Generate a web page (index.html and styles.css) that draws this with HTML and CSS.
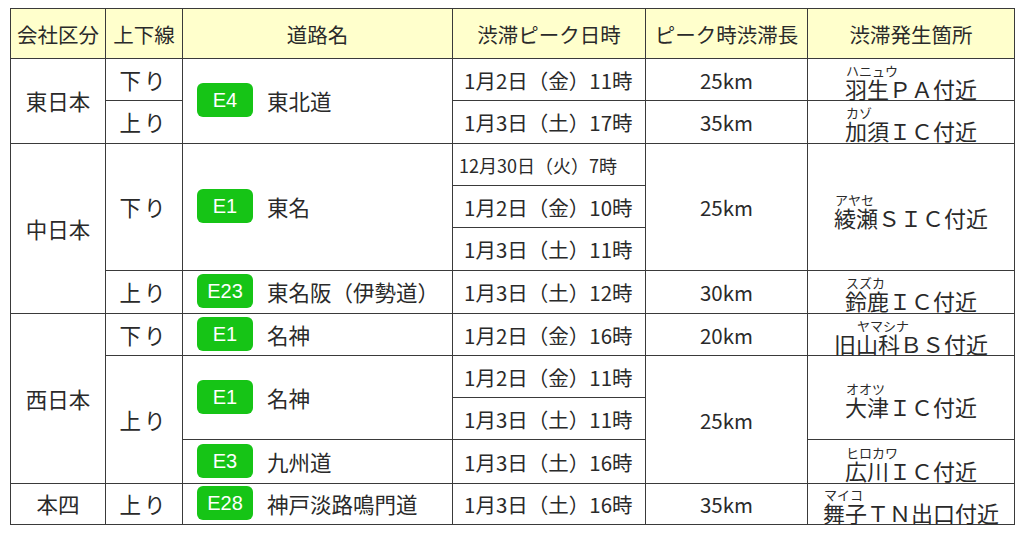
FILE: index.html
```html
<!DOCTYPE html>
<html lang="ja">
<head>
<meta charset="utf-8">
<title>渋滞予測</title>
<link rel="stylesheet" href="styles.css">
</head>
<body>
<table class="jam">
  <colgroup>
    <col class="c-co"><col class="c-dir"><col class="c-road"><col class="c-date"><col class="c-len"><col class="c-loc">
  </colgroup>
  <thead>
    <tr class="head">
      <th>会社区分</th><th>上下線</th><th>道路名</th><th>渋滞ピーク日時</th><th>ピーク時渋滞長</th><th>渋滞発生箇所</th>
    </tr>
  </thead>
  <tbody>
    <tr class="r42">
      <td class="co" rowspan="2">東日本</td>
      <td class="dir">下り</td>
      <td class="road" rowspan="2"><div class="rd"><span class="badge">E4</span><span>東北道</span></div></td>
      <td class="date">1月2日（金）11時</td>
      <td class="len">25km</td>
      <td class="loc"><span class="lc"><span class="furi">ハニュウ</span><span class="nm">羽生ＰＡ付近</span></span></td>
    </tr>
    <tr class="r43">
      <td class="dir">上り</td>
      <td class="date">1月3日（土）17時</td>
      <td class="len">35km</td>
      <td class="loc"><span class="lc"><span class="furi">カゾ</span><span class="nm">加須ＩＣ付近</span></span></td>
    </tr>
    <tr class="r42">
      <td class="co" rowspan="4">中日本</td>
      <td class="dir" rowspan="3">下り</td>
      <td class="road" rowspan="3"><div class="rd"><span class="badge">E1</span><span>東名</span></div></td>
      <td class="date small">12月30日（火）7時</td>
      <td class="len" rowspan="3">25km</td>
      <td class="loc tall" rowspan="3"><span class="lc"><span class="furi">アヤセ</span><span class="nm">綾瀬ＳＩＣ付近</span></span></td>
    </tr>
    <tr class="r42">
      <td class="date">1月2日（金）10時</td>
    </tr>
    <tr class="r43">
      <td class="date">1月3日（土）11時</td>
    </tr>
    <tr class="r43">
      <td class="dir">上り</td>
      <td class="road"><div class="rd"><span class="badge">E23</span><span>東名阪（伊勢道）</span></div></td>
      <td class="date">1月3日（土）12時</td>
      <td class="len">30km</td>
      <td class="loc"><span class="lc"><span class="furi">スズカ</span><span class="nm">鈴鹿ＩＣ付近</span></span></td>
    </tr>
    <tr class="r42">
      <td class="co" rowspan="4">西日本</td>
      <td class="dir">下り</td>
      <td class="road"><div class="rd"><span class="badge">E1</span><span>名神</span></div></td>
      <td class="date">1月2日（金）16時</td>
      <td class="len">20km</td>
      <td class="loc"><span class="lc"><span class="furi ind">ヤマシナ</span><span class="nm">旧山科ＢＳ付近</span></span></td>
    </tr>
    <tr class="r42">
      <td class="dir up-west" rowspan="3">上り</td>
      <td class="road" rowspan="2"><div class="rd"><span class="badge">E1</span><span>名神</span></div></td>
      <td class="date">1月2日（金）11時</td>
      <td class="len" rowspan="3">25km</td>
      <td class="loc" rowspan="2"><span class="lc"><span class="furi">オオツ</span><span class="nm">大津ＩＣ付近</span></span></td>
    </tr>
    <tr class="r42">
      <td class="date">1月3日（土）11時</td>
    </tr>
    <tr class="r44">
      <td class="road"><div class="rd"><span class="badge">E3</span><span>九州道</span></div></td>
      <td class="date">1月3日（土）16時</td>
      <td class="loc"><span class="lc"><span class="furi">ヒロカワ</span><span class="nm">広川ＩＣ付近</span></span></td>
    </tr>
    <tr class="r41">
      <td class="co">本四</td>
      <td class="dir">上り</td>
      <td class="road"><div class="rd"><span class="badge">E28</span><span>神戸淡路鳴門道</span></div></td>
      <td class="date">1月3日（土）16時</td>
      <td class="len">35km</td>
      <td class="loc"><span class="lc"><span class="furi">マイコ</span><span class="nm">舞子ＴＮ出口付近</span></span></td>
    </tr>
  </tbody>
</table>
</body>
</html>
```

FILE: styles.css
```css
html, body {
  margin: 0;
  padding: 0;
  background: #ffffff;
}

body {
  padding: 8px 0 0 10px;
  font-family: "Noto Sans CJK JP", "Noto Sans", sans-serif;
  color: #2a2a2a;
}

.jam {
  border-collapse: collapse;
  table-layout: fixed;
  width: 1004px;
  border: 1px solid #3a3a3a;
}

.c-co { width: 95px; }
.c-dir { width: 77px; }
.c-road { width: 270px; }
.c-date { width: 193px; }
.c-len { width: 162px; }
.c-loc { width: 207px; }

.jam th,
.jam td {
  border: 1px solid #3a3a3a;
  padding: 0;
  vertical-align: middle;
  text-align: center;
  font-weight: 400;
  white-space: nowrap;
}

.jam th {
  background: #ffffcc;
  font-size: 20.5px;
  line-height: 24px;
}

.head { height: 50px; }
.r41 { height: 41px; }
.r42 { height: 42px; }
.r43 { height: 43px; }
.r44 { height: 44px; }

.jam td {
  font-size: 21.5px;
  line-height: 26px;
}

.dir {
  letter-spacing: 3px;
  padding-left: 3px;
}

.up-west {
  padding-top: 16px;
}

.rd {
  display: flex;
  align-items: center;
  gap: 14px;
  padding-left: 14px;
}

.badge {
  display: inline-flex;
  align-items: center;
  justify-content: center;
  width: 56px;
  height: 34px;
  border-radius: 6px;
  background: #16c416;
  color: #ffffff;
  font-family: "Liberation Sans", Arial, sans-serif;
  font-size: 20px;
  line-height: 1;
  margin-top: -2px;
}

.jam td.date {
  text-align: left;
  padding-left: 11px;
  font-size: 20.5px;
}

.jam td.date.small {
  padding-left: 6px;
  font-size: 18px;
}

.jam td.len {
  font-size: 20.5px;
}

.jam td.loc {
  padding-top: 4px;
}

.jam td.loc.tall {
  padding-top: 8px;
}

.lc {
  display: inline-block;
  text-align: left;
  vertical-align: middle;
}

.furi {
  display: block;
  font-size: 13px;
  line-height: 13px;
  padding-left: 1px;
}

.furi.ind {
  padding-left: 23px;
}

.nm {
  display: block;
  font-size: 22px;
  line-height: 23px;
}
```
